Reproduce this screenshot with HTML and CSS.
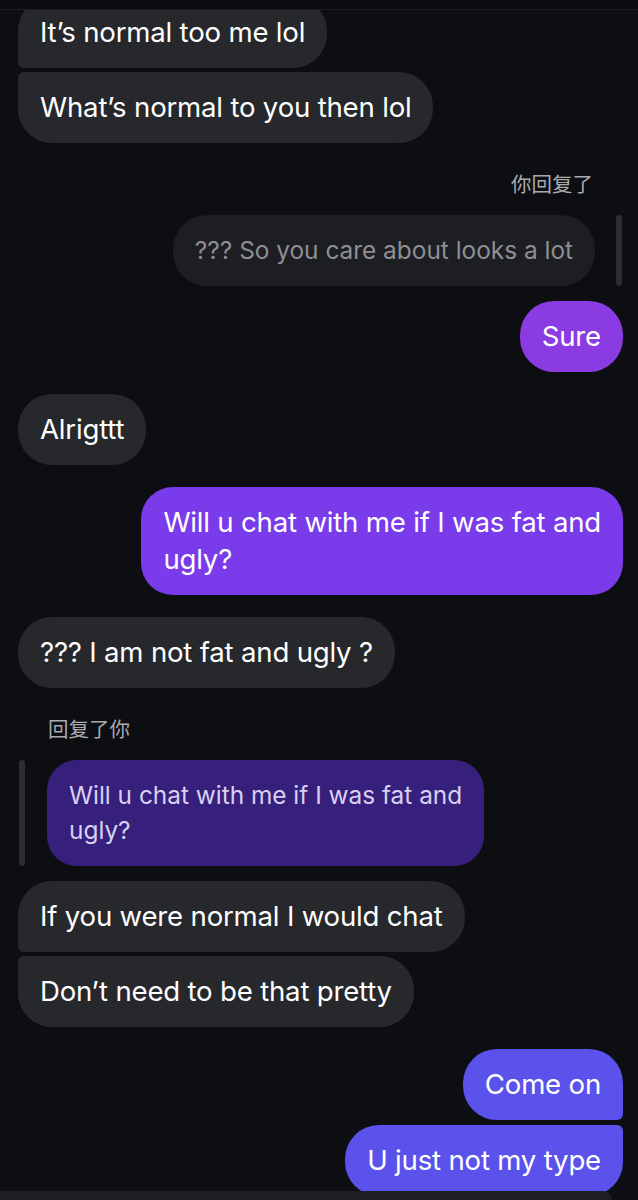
FILE: index.html
```html
<!DOCTYPE html>
<html lang="en">
<head>
    <meta charset="UTF-8">
    <meta name="viewport" content="width=device-width, initial-scale=1.0">
    <title>Chat</title>
    <link rel="stylesheet" href="styles.css">
</head>
<body>
    <div class="topbar"></div>

    <div class="chat">
        <div class="msg in group-top cut">It’s normal too me lol</div>
        <div class="msg in group-bottom">What’s normal to you then lol</div>

        <div class="reply-label out-label">你回复了</div>
        <div class="quote-row out-quote">
            <div class="quote-bubble">??? So you care about looks a lot</div>
            <div class="quote-bar"></div>
        </div>
        <div class="msg out violet tight">Sure</div>

        <div class="msg in">Alrigttt</div>

        <div class="msg out purple">Will u chat with me if I was fat and<br>ugly?</div>

        <div class="msg in">??? I am not fat and ugly ?</div>

        <div class="reply-label in-label">回复了你</div>
        <div class="quote-row in-quote">
            <div class="quote-bar"></div>
            <div class="quote-bubble dark-purple">Will u chat with me if I was fat and<br>ugly?</div>
        </div>
        <div class="msg in group-top tight">If you were normal I would chat</div>
        <div class="msg in group-bottom">Don’t need to be that pretty</div>

        <div class="msg out blue group-top">Come on</div>
        <div class="msg out blue group-bottom">U just not my type</div>
    </div>

    <div class="composer"></div>
</body>
</html>
```

FILE: styles.css
```css
html, body {
    margin: 0;
    height: 1200px;
    overflow: hidden;
    background: #0c0e12;
}
body {
    font-family: Inter, "Noto Sans", sans-serif;
    color: #fff;
    position: relative;
}
.topbar {
    height: 9px;
    background: #0a0c10;
    border-bottom: 1px solid #1d1f23;
}
.chat {
    display: flex;
    flex-direction: column;
    padding: 0 15px 0 18px;
    overflow: hidden;
}
.msg {
    font-size: 27.6px;
    line-height: 37px;
    padding: 17px 22px;
    border-radius: 34px;
    background: #26282c;
    margin-top: 22px;
    letter-spacing: -0.2px;
}
.msg.in {
    align-self: flex-start;
}
.msg.out {
    align-self: flex-end;
}
.msg.cut {
    margin-top: -13px;
}
.msg.tight {
    margin-top: 15px;
}
.msg.in.group-top {
    border-bottom-left-radius: 6px;
}
.msg.in.group-bottom {
    border-top-left-radius: 6px;
    margin-top: 4px;
}
.msg.out.group-top {
    border-bottom-right-radius: 6px;
}
.msg.out.group-bottom {
    border-top-right-radius: 6px;
    margin-top: 5px;
}
.violet {
    background: #8a3be2;
}
.purple {
    background: #7a3bea;
    border-radius: 32px;
}
.blue {
    background: #5a52ea;
}
.reply-label {
    font-family: "Noto Sans CJK SC", sans-serif;
    font-size: 20.5px;
    line-height: 24px;
    color: #a9aaad;
    margin-top: 28px;
}
.out-label {
    align-self: flex-end;
    margin-right: 30px;
}
.in-label {
    align-self: flex-start;
    margin-left: 30px;
}
.quote-row {
    display: flex;
    gap: 21px;
    margin-top: 20px;
}
.out-quote {
    align-self: flex-end;
    margin-right: 1px;
}
.in-quote {
    align-self: flex-start;
    margin-left: 1px;
    gap: 22px;
}
.quote-bar {
    width: 6px;
    border-radius: 3px;
    background: #2b2d31;
}
.quote-bubble {
    font-size: 24.4px;
    line-height: 35px;
    padding: 18px 22px;
    border-radius: 34px;
    background: #1c1e22;
    color: #8e8f93;
}
.quote-bubble.dark-purple {
    background: #36207c;
    color: #d8d0f2;
    border-radius: 30px;
}
.composer {
    position: absolute;
    left: 0;
    bottom: 0;
    width: 612px;
    height: 9px;
    background: #1c1e22;
    border-top-right-radius: 10px;
}
```
